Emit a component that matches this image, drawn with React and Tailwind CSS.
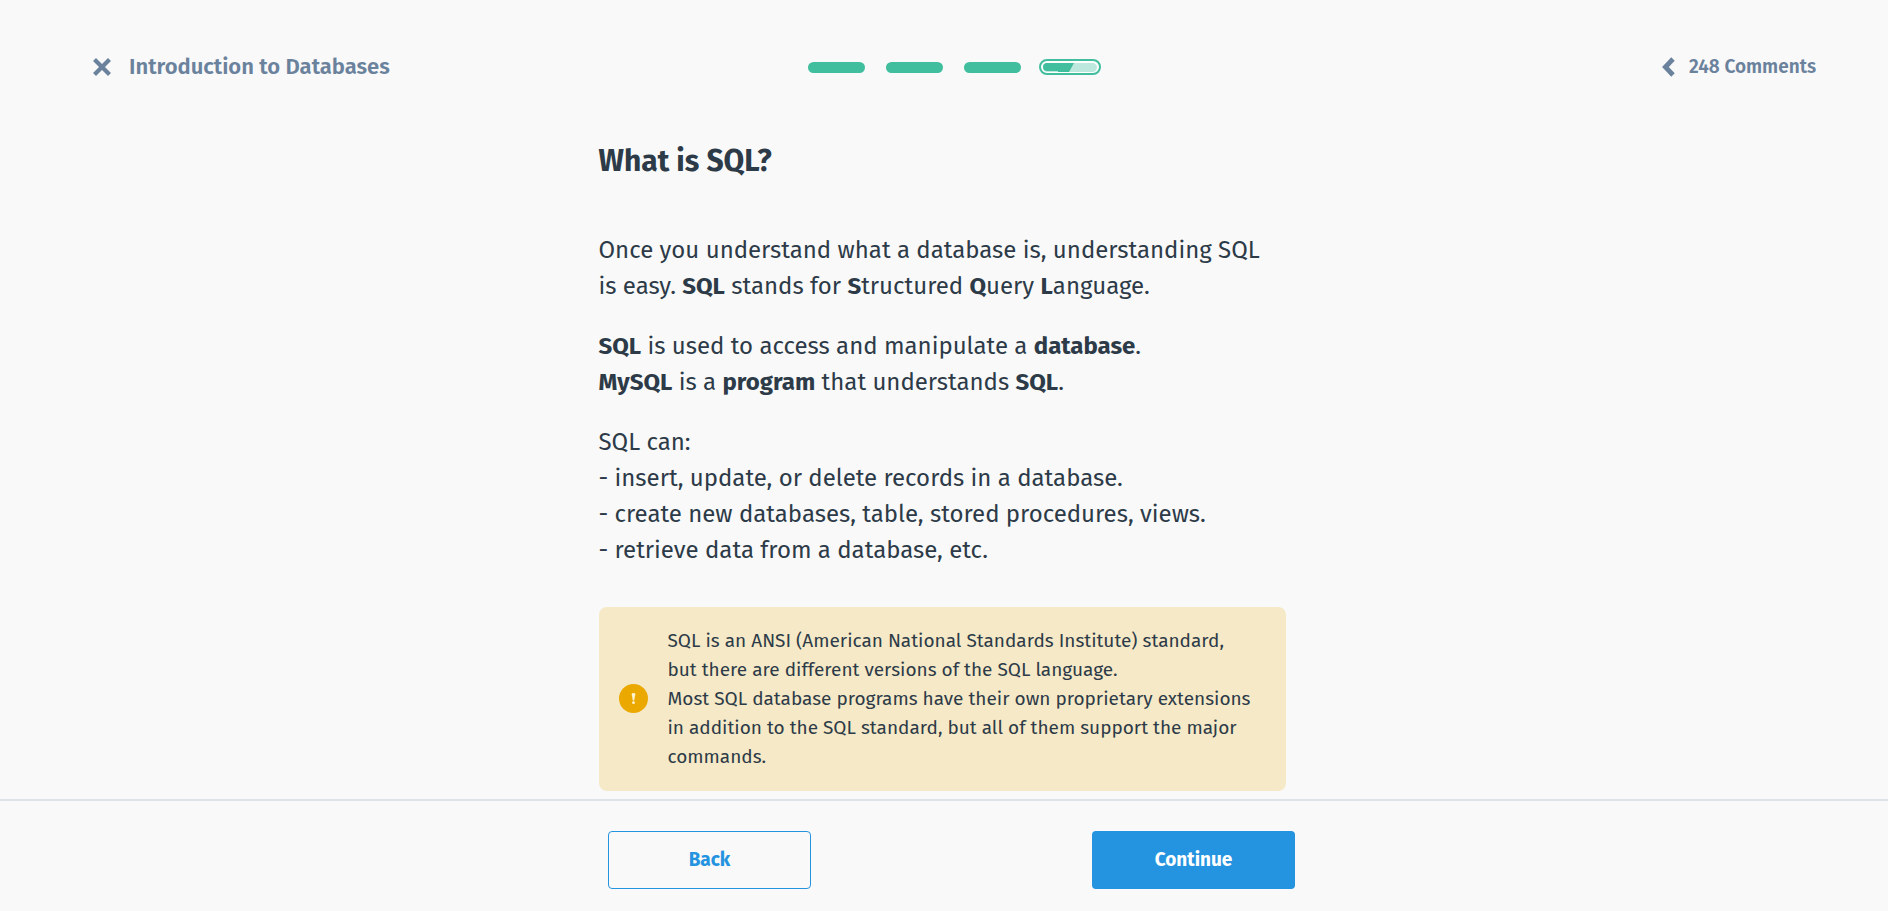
const SEGMENTS = ['Part 1', 'Part 2', 'Part 3'];

function CloseIcon() {
  return (
    <svg className="h-[18px] w-[18px]" viewBox="0 0 18 18" aria-hidden="true">
      <path d="M3 3L15 15M15 3L3 15" stroke="currentColor" strokeWidth="4.2" strokeLinecap="square" fill="none" />
    </svg>
  );
}

function ChevronIcon() {
  return (
    <svg className="h-5 w-[13px]" viewBox="0 0 13 20" aria-hidden="true">
      <path d="M11 2L3.4 10L11 18" stroke="currentColor" strokeWidth="4.8" fill="none" />
    </svg>
  );
}

function ActiveSegment() {
  return (
    <svg className="h-4 w-[62px]" viewBox="0 0 62 16" aria-hidden="true">
      <rect x="1" y="1" width="60" height="14" rx="7" fill="#fff" stroke="#41be9d" strokeWidth="2" />
      <rect x="4" y="4" width="54" height="9" rx="4.5" fill="#bce8de" />
      <path d="M8 4H35L30 13H19V12H8A4 4 0 0 1 8 4Z" fill="#41be9d" />
    </svg>
  );
}

export default function App() {
  return (
    <div className="flex min-h-screen flex-col bg-[#f9f9f9] font-['Fira_Sans','Noto_Sans',sans-serif] text-[#2d3b48]">
      <header className="grid grid-cols-[1fr_auto_1fr] items-center pt-[51px] pr-[72px] pl-[93px] text-[#6b829d]">
        <button type="button" className="flex h-8 items-center gap-[18px] justify-self-start text-[22px] leading-8 font-semibold">
          <CloseIcon />
          Introduction to Databases
        </button>
        <div className="flex items-center gap-[18px]" role="group" aria-label="Lesson progress">
          <div className="flex gap-[21px]">
            {SEGMENTS.map((name) => (
              <div key={name} className="h-[11px] w-[57px] rounded-full bg-[#41be9d]" />
            ))}
          </div>
          <ActiveSegment />
        </div>
        <button type="button" className="flex h-8 items-center gap-[14px] justify-self-end text-[19px] leading-8 font-semibold">
          <ChevronIcon />
          248 Comments
        </button>
      </header>

      <main className="flex-1 pr-1 pb-2">
        <div className="mx-auto w-full max-w-[687px]">
          <h1 className="mt-[60px] text-[30px] leading-9 font-bold">What is SQL?</h1>
          <div className="mt-[53px] space-y-6 text-[24px] leading-9">
            <p>
              Once you understand what a database is, understanding SQL
              <br />
              is easy. <b>SQL</b> stands for <b>S</b>tructured <b>Q</b>uery <b>L</b>anguage.
            </p>
            <p>
              <b>SQL</b> is used to access and manipulate a <b>database</b>.
              <br />
              <b>MySQL</b> is a <b>program</b> that understands <b>SQL</b>.
            </p>
            <p>
              SQL can:
              <br />- insert, update, or delete records in a database.
              <br />- create new databases, table, stored procedures, views.
              <br />- retrieve data from a database, etc.
            </p>
          </div>
          <aside className="mt-[39px] flex items-center gap-5 rounded-lg bg-[#f6e9c7] px-5 pt-[19px] pb-5">
            <svg className="h-[29px] w-[29px] shrink-0" viewBox="0 0 29 29" aria-hidden="true">
              <circle cx="14.5" cy="14.5" r="14.5" fill="#eba900" />
              <path d="M12.7 10.2Q12.7 9 14.5 9T16.3 10.2L15.2 16.5H13.8Z" fill="#fff3d0" />
              <circle cx="14.5" cy="18.7" r="1.4" fill="#fff3d0" />
            </svg>
            <p className="text-[19px] leading-[29px] whitespace-nowrap">
              SQL is an ANSI (American National Standards Institute) standard,
              <br />
              but there are different versions of the SQL language.
              <br />
              Most SQL database programs have their own proprietary extensions
              <br />
              in addition to the SQL standard, but all of them support the major
              <br />
              commands.
            </p>
          </aside>
        </div>
      </main>

      <footer className="border-t-2 border-[#dee3e8] pt-[30px] pb-[22px] pl-[15px]">
        <div className="mx-auto flex w-full max-w-[687px] justify-between text-[19px] font-bold">
          <button type="button" className="h-[58px] w-[203px] rounded border border-[#2493e0] text-[#2493e0]">
            Back
          </button>
          <button type="button" className="h-[58px] w-[203px] rounded bg-[#2493e0] text-white">
            Continue
          </button>
        </div>
      </footer>
    </div>
  );
}
